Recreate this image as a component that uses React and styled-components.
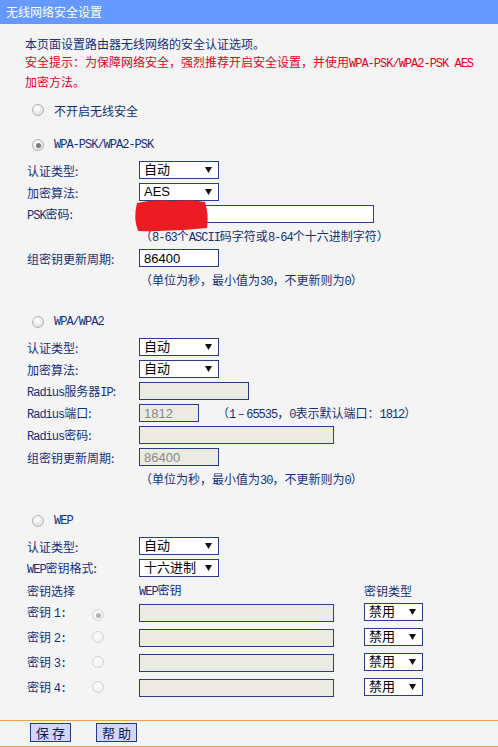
import React from 'react';
import styled, { createGlobalStyle } from 'styled-components';

const GlobalStyle = createGlobalStyle`
  html, body { margin: 0; padding: 0; background: #f4f4f4; }
  body {
    font-family: "Noto Sans CJK SC", "Noto Sans", sans-serif;
    font-size: 12px;
    color: #14307c;
  }
  * { box-sizing: border-box; }
`;

const NAVY_BORDER = '#2a3d8c';

const Page = styled.div`
  width: 498px;
  min-height: 747px;
  display: flex;
  flex-direction: column;
`;

const TitleBar = styled.div`
  height: 24px;
  background: #6699ff;
  color: #fff;
  font-size: 12px;
  line-height: 24px;
  padding-left: 6px;
`;

const Intro = styled.div`
  margin: 11px 0 0 25px;
  line-height: 18px;
`;

const Warn = styled.div`
  color: #e5001c;
`;

const Lat = styled.span`
  font-family: "Liberation Mono", monospace;
  font-size: 12px;
  letter-spacing: -1px;
`;

const Section = styled.section`
  display: flex;
  flex-direction: column;
  gap: 4px;
  margin-top: ${(p) => p.$mt}px;
`;

const RadioRow = styled.label`
  display: flex;
  align-items: center;
  height: 18px;
  padding-left: 32px;
  gap: 10px;
`;

const Radio = styled.span`
  width: 12px;
  height: 12px;
  border-radius: 50%;
  border: 1px solid ${(p) => (p.$disabled ? '#d4d4d4' : '#b4b4b4')};
  background: ${(p) =>
    p.$disabled
      ? 'radial-gradient(circle at 40% 35%, #fdfdfd, #ececec)'
      : 'radial-gradient(circle at 40% 35%, #ffffff, #d6d6d6)'};
  display: inline-flex;
  align-items: center;
  justify-content: center;
  flex: none;
  &::after {
    content: '';
    width: 5px;
    height: 5px;
    border-radius: 50%;
    background: ${(p) => (p.$disabled ? '#b0b0b0' : '#7a7a7a')};
    display: ${(p) => (p.$checked ? 'block' : 'none')};
  }
`;

const Fields = styled.div`
  display: grid;
  grid-template-columns: 112px 1fr;
  grid-auto-rows: 18px;
  row-gap: 4px;
  padding-left: 27px;
  margin-top: 3px;
  align-items: center;
`;

const Label = styled.div`
  white-space: nowrap;
`;

const Control = styled.div`
  display: flex;
  align-items: center;
  gap: 18px;
  height: 18px;
`;

const Hint = styled.div`
  grid-column: 2;
  white-space: nowrap;
  padding-left: 1px;
`;

const SelectBox = styled.div`
  width: ${(p) => p.$w}px;
  height: 18px;
  border: 1px solid ${NAVY_BORDER};
  background: #fff;
  display: flex;
  align-items: center;
  justify-content: space-between;
  padding: 0 6px 0 4px;
  font-family: "Liberation Sans", "Noto Sans CJK SC", sans-serif;
  font-size: 13px;
  color: #000;
  line-height: 16px;
`;

const Arrow = () => (
  <svg width="7" height="6" viewBox="0 0 7 6">
    <path d="M0 0H7L3.5 6Z" fill="#111" />
  </svg>
);

const Select = ({ w, value }) => (
  <SelectBox $w={w}>
    <span>{value}</span>
    <Arrow />
  </SelectBox>
);

const TextInput = styled.input`
  width: ${(p) => p.$w}px;
  height: 18px;
  border: 1px solid ${NAVY_BORDER};
  background: #fff;
  padding: 0 4px;
  margin: 0;
  font-family: "Liberation Sans", sans-serif;
  font-size: 13px;
  color: #000;
  &:disabled {
    background: #ebeae3;
    color: #8a8a8a;
    -webkit-text-fill-color: #8a8a8a;
    opacity: 1;
  }
`;

const Masked = styled.span`
  position: relative;
  display: inline-flex;
`;

const Scribble = styled.svg`
  position: absolute;
  left: -6px;
  top: -7px;
`;

const KeyTable = styled.div`
  display: flex;
  flex-direction: column;
  gap: 4px;
`;

const KeyList = styled.div`
  display: flex;
  flex-direction: column;
  gap: 7px;
`;

const KeyRowGrid = styled.div`
  display: grid;
  grid-template-columns: 65px 47px 225px 60px;
  align-items: center;
  height: 18px;
  padding-left: 27px;
`;

const SpanTwo = styled.div`
  grid-column: span 2;
`;

const Footer = styled.footer`
  margin-top: auto;
  border-top: 1px solid #f2a04e;
  border-bottom: 1px solid #f2a04e;
  padding: 2px 0 4px 30px;
  display: flex;
  gap: 25px;
`;

const Button = styled.button`
  width: 41px;
  height: 19px;
  padding: 0;
  margin: 0;
  border: 1px solid #25398a;
  background: #d3d7f7;
  font-family: "Noto Sans CJK SC", sans-serif;
  font-size: 13px;
  line-height: 17px;
  color: #0e1c50;
  letter-spacing: 3px;
  text-indent: 3px;
`;

const keys = [1, 2, 3, 4];

export default function App() {
  return (
    <>
      <GlobalStyle />
      <Page>
        <TitleBar>无线网络安全设置</TitleBar>
        <Intro>
          <div>本页面设置路由器无线网络的安全认证选项。</div>
          <Warn>
            安全提示：为保障网络安全，强烈推荐开启安全设置，并使用
            <Lat>WPA-PSK/WPA2-PSK AES</Lat>
            <br />
            加密方法。
          </Warn>
        </Intro>

        <Section $mt={10}>
          <RadioRow>
            <Radio />
            <span>不开启无线安全</span>
          </RadioRow>
        </Section>

        <Section $mt={17}>
          <RadioRow>
            <Radio $checked />
            <Lat>WPA-PSK/WPA2-PSK</Lat>
          </RadioRow>
          <Fields>
            <Label>认证类型:</Label>
            <Control><Select w={80} value="自动" /></Control>
            <Label>加密算法:</Label>
            <Control><Select w={80} value="AES" /></Control>
            <Label><Lat>PSK</Lat>密码:</Label>
            <Control>
              <Masked>
                <TextInput $w={235} defaultValue="" />
                <Scribble width="78" height="34" viewBox="0 0 78 34">
                  <path
                    d="M4 5 Q20 1 40 3 Q58 1 72 4 Q76 17 74 30 Q40 34 5 33 Q0 20 4 5 Z"
                    fill="#ec1c24"
                  />
                </Scribble>
              </Masked>
            </Control>
            <Hint>（<Lat>8-63</Lat>个<Lat>ASCII</Lat>码字符或<Lat>8-64</Lat>个十六进制字符）</Hint>
            <Label>组密钥更新周期:</Label>
            <Control><TextInput $w={80} defaultValue="86400" /></Control>
            <Hint>（单位为秒，最小值为<Lat>30</Lat>，不更新则为<Lat>0</Lat>）</Hint>
          </Fields>
        </Section>

        <Section $mt={24}>
          <RadioRow>
            <Radio />
            <Lat>WPA/WPA2</Lat>
          </RadioRow>
          <Fields>
            <Label>认证类型:</Label>
            <Control><Select w={80} value="自动" /></Control>
            <Label>加密算法:</Label>
            <Control><Select w={80} value="自动" /></Control>
            <Label><Lat>Radius</Lat>服务器<Lat>IP</Lat>:</Label>
            <Control><TextInput $w={110} disabled defaultValue="" /></Control>
            <Label><Lat>Radius</Lat>端口:</Label>
            <Control>
              <TextInput $w={60} disabled defaultValue="1812" />
              <span>（<Lat>1－65535</Lat>，<Lat>0</Lat>表示默认端口：<Lat>1812</Lat>）</span>
            </Control>
            <Label><Lat>Radius</Lat>密码:</Label>
            <Control><TextInput $w={195} disabled defaultValue="" /></Control>
            <Label>组密钥更新周期:</Label>
            <Control><TextInput $w={80} disabled defaultValue="86400" /></Control>
            <Hint>（单位为秒，最小值为<Lat>30</Lat>，不更新则为<Lat>0</Lat>）</Hint>
          </Fields>
        </Section>

        <Section $mt={24}>
          <RadioRow>
            <Radio />
            <Lat>WEP</Lat>
          </RadioRow>
          <Fields>
            <Label>认证类型:</Label>
            <Control><Select w={80} value="自动" /></Control>
            <Label><Lat>WEP</Lat>密钥格式:</Label>
            <Control><Select w={80} value="十六进制" /></Control>
          </Fields>
          <KeyTable>
            <KeyRowGrid>
              <SpanTwo>密钥选择</SpanTwo>
              <div><Lat>WEP</Lat>密钥</div>
              <div>密钥类型</div>
            </KeyRowGrid>
            <KeyList>
              {keys.map((k) => (
                <KeyRowGrid key={k}>
                  <Label>密钥 <Lat>{k}:</Lat></Label>
                  <div><Radio $disabled $checked={k === 1} /></div>
                  <div><TextInput $w={195} disabled defaultValue="" /></div>
                  <Select w={59} value="禁用" />
                </KeyRowGrid>
              ))}
            </KeyList>
          </KeyTable>
        </Section>

        <Footer>
          <Button>保存</Button>
          <Button>帮助</Button>
        </Footer>
      </Page>
    </>
  );
}
